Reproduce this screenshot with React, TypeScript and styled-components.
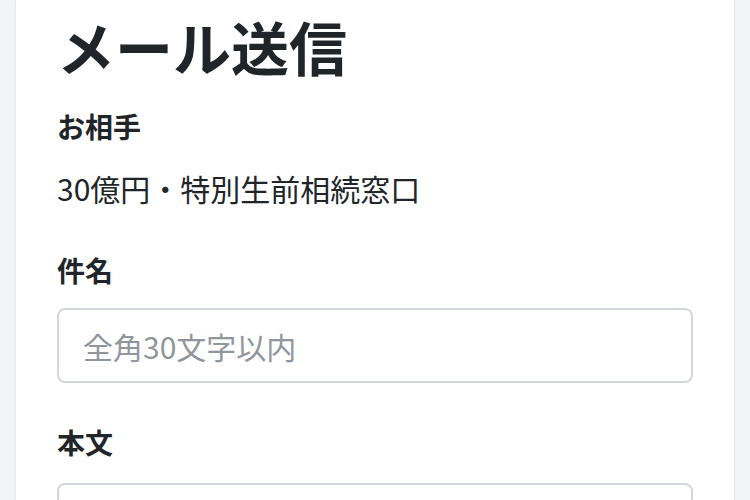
import React from 'react';
import styled, { createGlobalStyle } from 'styled-components';

const GlobalStyle = createGlobalStyle`
  html, body {
    margin: 0;
    padding: 0;
    background: #f3f4f7;
  }
  body {
    font-family: "Noto Sans CJK JP", "Noto Sans", sans-serif;
    color: #212529;
  }
`;

const Page = styled.div`
  height: 500px;
  overflow: hidden;
`;

const Card = styled.main`
  margin: 0 16px;
  padding: 11px 41px 0;
  min-height: 600px;
  background: #fff;
  box-shadow: 0 0 0 1px #e8e9ec, 0 0 3px rgba(0, 0, 0, 0.06);
`;

const Title = styled.h1`
  margin: 0 0 24px;
  font-size: 58px;
  font-weight: 700;
  line-height: 70px;
`;

const Field = styled.section`
  display: flex;
  flex-direction: column;
  margin-bottom: 38px;
`;

const Label = styled.label<{ gap: number }>`
  font-size: 28px;
  font-weight: 700;
  line-height: 42px;
  margin-bottom: ${props => props.gap}px;
`;

const Value = styled.p`
  margin: 0;
  font-size: 30px;
  line-height: 45px;
  font-weight: 400;
`;

const TextInput = styled.input`
  box-sizing: border-box;
  width: 100%;
  height: 75px;
  padding: 0 24px;
  border: 2px solid #d3d7db;
  border-radius: 8px;
  font-family: inherit;
  font-size: 30px;
  color: #212529;
  background: #fff;
  outline: none;

  &::placeholder {
    color: #90969c;
  }
`;

const TextArea = styled.textarea`
  box-sizing: border-box;
  width: 100%;
  height: 220px;
  padding: 16px 24px;
  border: 2px solid #d3d7db;
  border-radius: 8px;
  font-family: inherit;
  font-size: 30px;
  resize: none;
  outline: none;
`;

export default function App() {
  return (
    <Page>
      <GlobalStyle />
      <Card>
        <Title>メール送信</Title>
        <Field>
          <Label gap={19}>お相手</Label>
          <Value>30億円・特別生前相続窓口</Value>
        </Field>
        <Field>
          <Label gap={17}>件名</Label>
          <TextInput placeholder="全角30文字以内" />
        </Field>
        <Field>
          <Label gap={20}>本文</Label>
          <TextArea />
        </Field>
      </Card>
    </Page>
  );
}
